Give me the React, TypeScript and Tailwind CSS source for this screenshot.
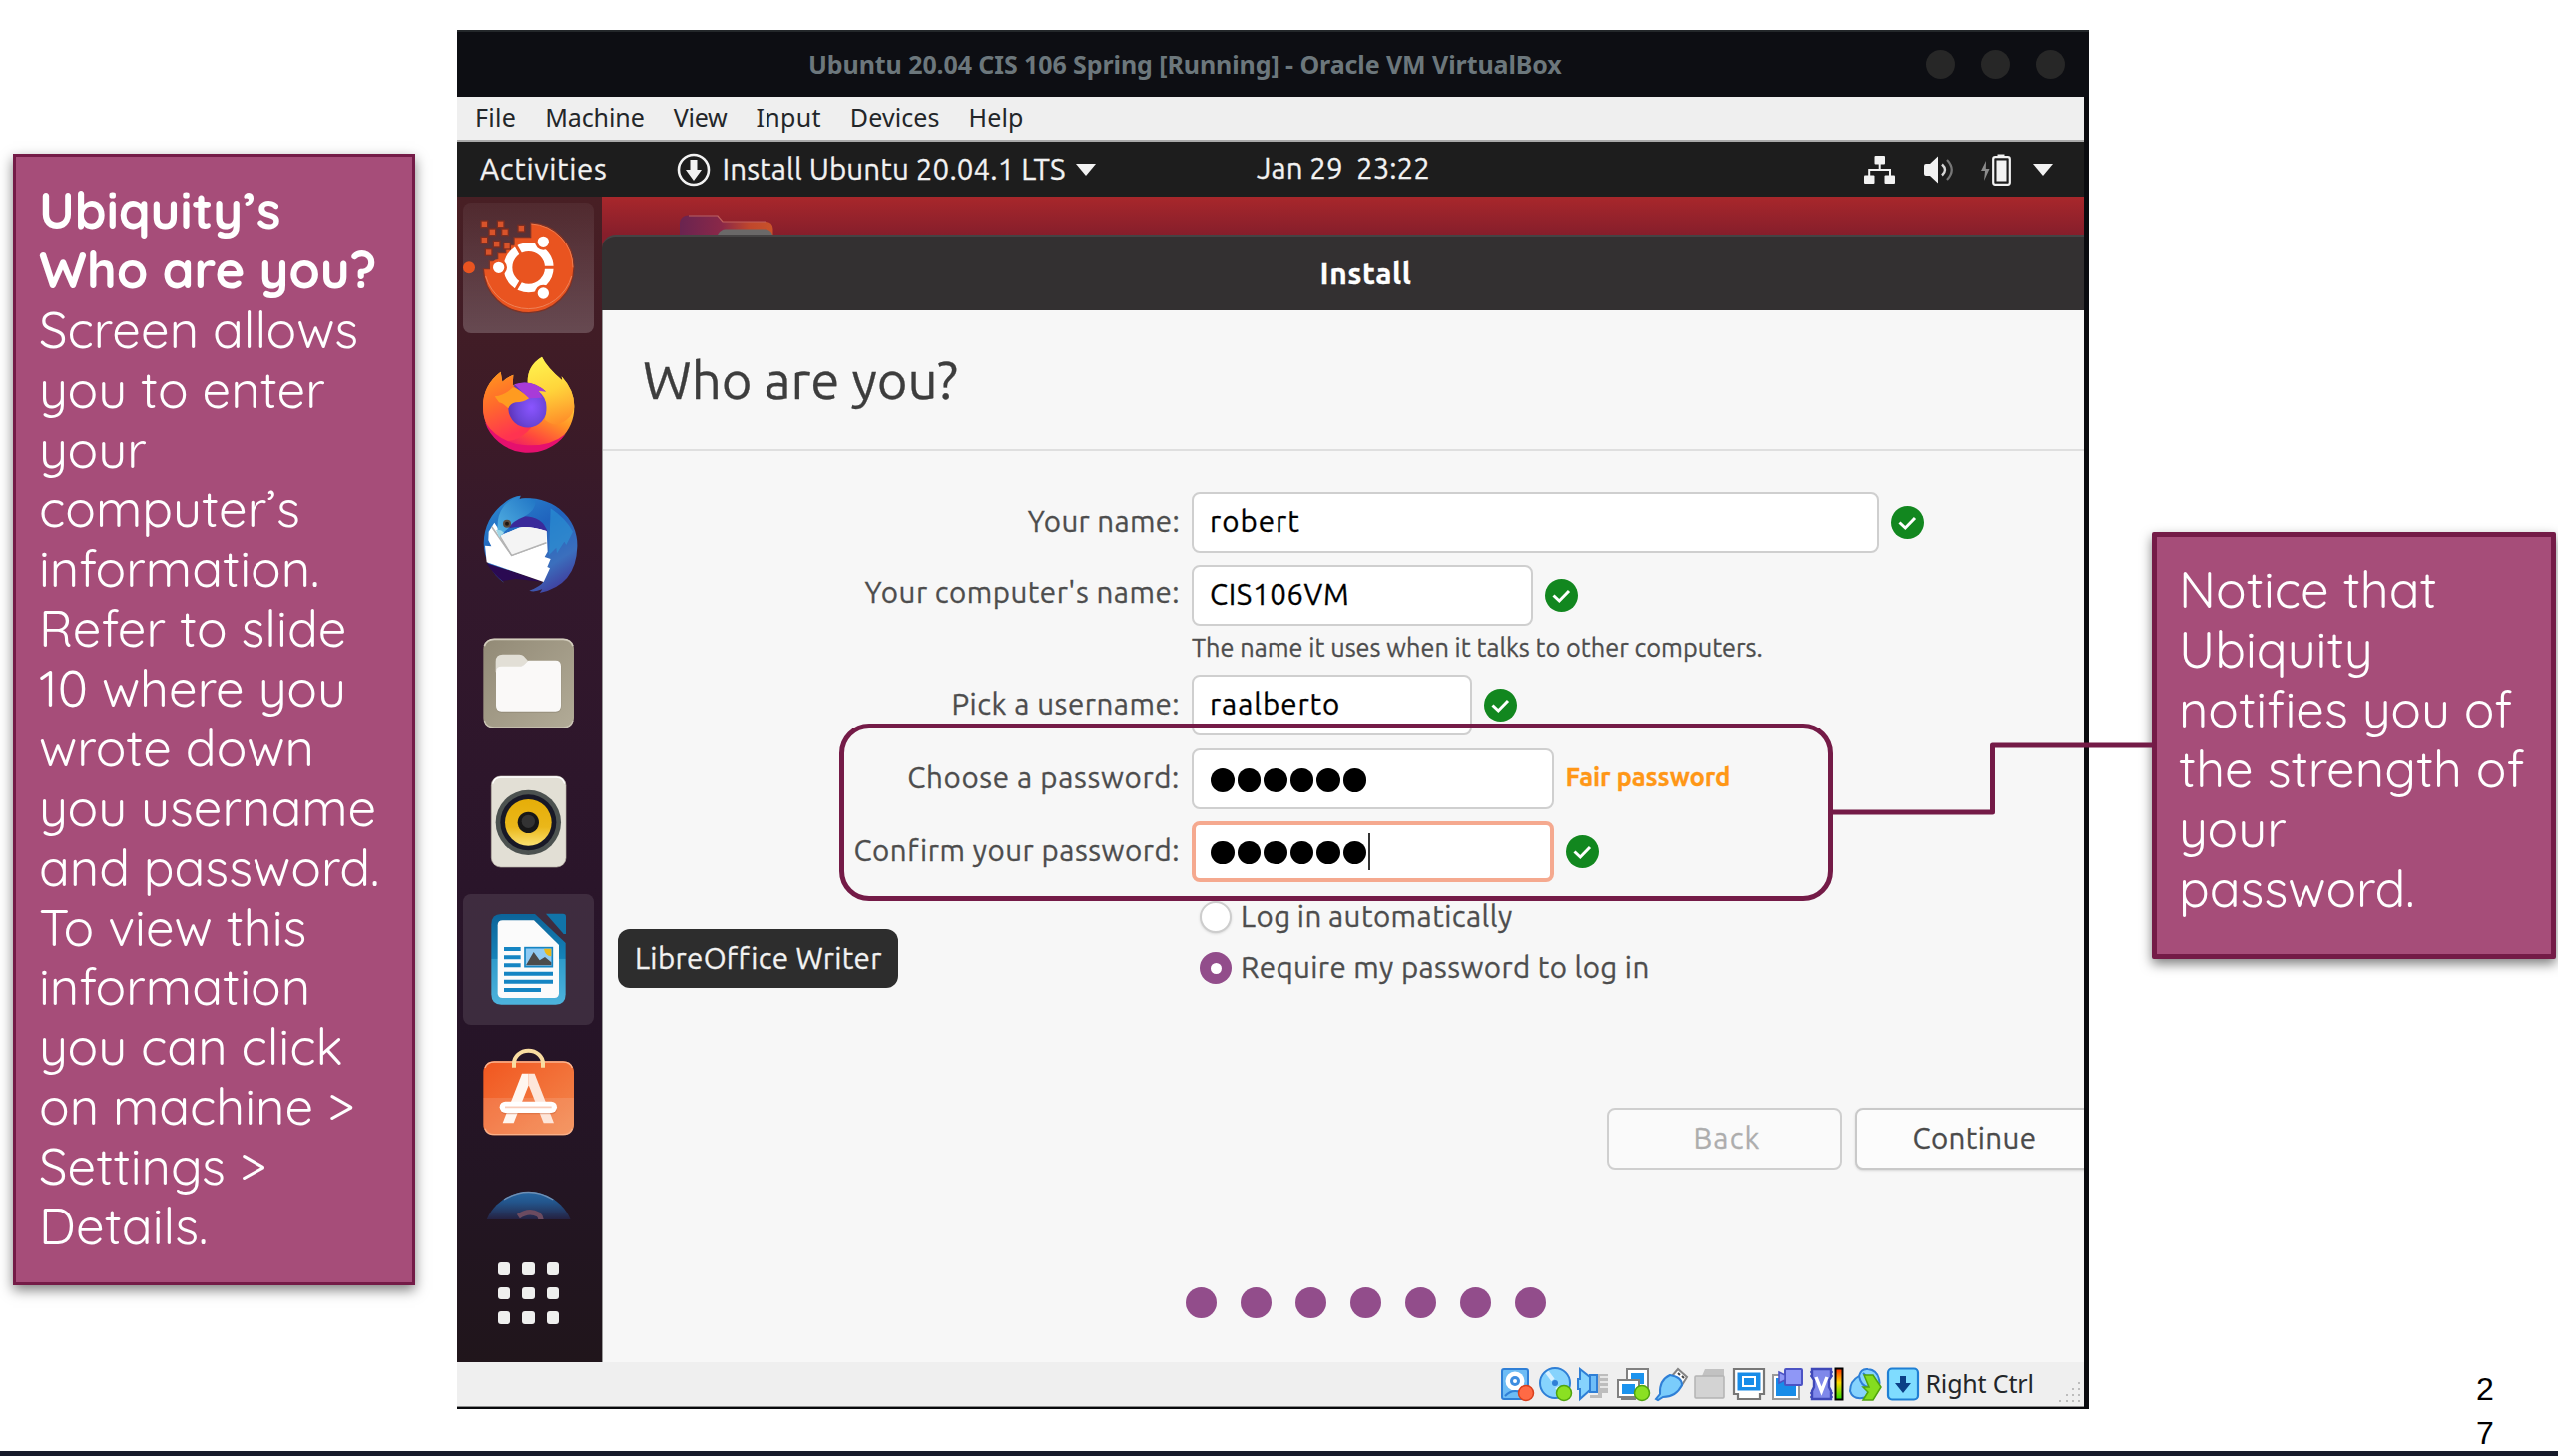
import type { ReactNode } from "react";

const ubuntu = "font-['Ubuntu','Noto_Sans',sans-serif] [-webkit-text-stroke:0.3px]";
const noto = "font-['Noto_Sans',sans-serif]";
const quicksand = "font-['Quicksand','Lato',sans-serif]";

/* ---------- Slide call-outs ---------- */

const introLines = [
  "Screen allows",
  "you to enter",
  "your",
  "computer’s",
  "information.",
  "Refer to slide",
  "10 where you",
  "wrote down",
  "you username",
  "and password.",
  "To view this",
  "information",
  "you can click",
  "on machine >",
  "Settings >",
  "Details.",
];

const noticeLines = ["Notice that", "Ubiquity", "notifies you of", "the strength of", "your", "password."];

function IntroCallout() {
  return (
    <aside
      className={`mt-[154px] ml-[13px] h-[1134px] w-[403px] shrink-0 border-[3px] border-[#741b47] bg-[#a64d79] pt-[24px] pl-[23px] text-[50.8px] leading-[59.88px] whitespace-nowrap text-white shadow-[0_5px_12px_rgba(0,0,0,0.5)] ${quicksand}`}
    >
      <p className="font-bold">Ubiquity’s</p>
      <p className="font-bold">Who are you?</p>
      {introLines.map((line, i) => (
        <p key={i}>{line}</p>
      ))}
    </aside>
  );
}

function NoticeCallout() {
  return (
    <aside
      className={`mt-[533px] ml-[63px] h-[428px] w-[405px] shrink-0 rounded-[2px] border-[5px] border-[#741b47] bg-[#a64d79] pt-[22px] pl-[22px] text-[50.8px] leading-[60px] whitespace-nowrap text-white shadow-[0_5px_12px_rgba(0,0,0,0.5)] ${quicksand}`}
    >
      {noticeLines.map((line) => (
        <p key={line}>{line}</p>
      ))}
    </aside>
  );
}

/* ---------- Host window ---------- */

function TitleBar() {
  return (
    <div className="flex h-[67px] items-center border-t-2 border-[#23272a] bg-[#0d0e13]">
      <div className={`pl-[352px] text-[25px] font-bold tracking-[-0.09px] text-[#6c777c] ${noto}`}>
        Ubuntu 20.04 CIS 106 Spring [Running] - Oracle VM VirtualBox
      </div>
      <div className="mr-[24px] ml-auto flex gap-[26px]">
        <span className="size-[29px] rounded-full bg-[#272727]" />
        <span className="size-[29px] rounded-full bg-[#272727]" />
        <span className="size-[29px] rounded-full bg-[#272727]" />
      </div>
    </div>
  );
}

function MenuBar() {
  return (
    <div
      className={`flex h-[45px] items-center gap-[29px] border-b-2 border-[#a9a9a9] bg-[#efefef] pb-px pl-[18px] text-[25px] text-[#232629] ${noto}`}
    >
      <span className="tracking-[0.3px]">File</span>
      <span className="tracking-[-0.1px]">Machine</span>
      <span className="tracking-[-0.2px]">View</span>
      <span className="tracking-[0.3px]">Input</span>
      <span className="tracking-[0.1px]">Devices</span>
      <span className="tracking-[0.1px]">Help</span>
    </div>
  );
}

function Triangle() {
  return (
    <svg className="h-[12px] w-[20px]" viewBox="0 0 20 12">
      <path d="M0 0H20L10 12Z" fill="#f2f2f2" />
    </svg>
  );
}

function TopPanel() {
  return (
    <div className={`flex h-[55px] items-center bg-[#1d1d1d] pt-px text-[29.5px] font-[450] whitespace-pre text-[#f2f2f2] ${ubuntu}`}>
      <span className="w-[220px] pl-[23px] tracking-[0.65px]">Activities</span>
      <svg className="h-[34px] w-[34px]" viewBox="0 0 34 34">
        <circle cx="17" cy="17" r="15" fill="none" stroke="#f2f2f2" strokeWidth="2.6" />
        <path d="M13.500 7H20.500V17H25L17 28L9 17H13.500Z" fill="#f2f2f2" />
      </svg>
      <span className="w-[366px] pl-[11.5px] tracking-[0.13px]">Install Ubuntu 20.04.1 LTS</span>
      <Triangle />
      <span className="ml-[161px] pb-[2px]">Jan 29  23:22</span>
      <div className="mr-[31px] ml-auto flex items-center">
        <svg className="h-[28px] w-[32px]" viewBox="0 0 32 28" fill="#f2f2f2">
          <rect x="10.500" y="0" width="10.500" height="8.500" rx="1" />
          <rect x="0" y="19.500" width="10.500" height="8.500" rx="1" />
          <rect x="20.500" y="19.500" width="10.500" height="8.500" rx="1" />
          <path d="M15.700 8V14M5.200 20V14H26V20" fill="none" stroke="#f2f2f2" strokeWidth="2" />
        </svg>
        <svg className="ml-[28px] h-[28px] w-[31px]" viewBox="0 0 31 28">
          <path d="M0 10Q0 8 2 8H6L14 0.500V27.500L6 20H2Q0 20 0 18Z" fill="#f2f2f2" />
          <path d="M18 8.500Q24 14 18 19.500" fill="none" stroke="#d8d8d8" strokeWidth="2.400" />
          <path d="M23 4Q32.500 14 23 24" fill="none" stroke="#777" strokeWidth="2.200" />
        </svg>
        <svg className="ml-[26px] h-[32px] w-[30px]" viewBox="0 0 30 32">
          <path d="M5 7L0 17H4L3 27L8.500 15H4.800Z" fill="#8b8b8b" />
          <rect x="16.500" y="0.500" width="7" height="3" fill="#f2f2f2" />
          <rect x="12.200" y="3.200" width="16.600" height="27.600" rx="2" fill="none" stroke="#f2f2f2" strokeWidth="2.200" />
          <rect x="15.500" y="6.500" width="10" height="21" fill="#f2f2f2" />
        </svg>
        <span className="ml-[22px]">
          <Triangle />
        </span>
      </div>
    </div>
  );
}

/* ---------- Dock ---------- */

const pixelBlocks = [
  [106, 104],
  [155, 104],
  [130, 128],
  [168, 128],
  [217, 117],
  [106, 153],
  [143, 165],
  [174, 171],
  [119, 190],
];

function InstallerIcon() {
  return (
    <svg className="size-full" viewBox="42 40 393 393">
      <circle cx="60" cy="236" r="18" fill="#e95420" />
      <path
        d="M245 100A136 136 0 1 1 103 240H121V216H146V192H170V168H195V144H245Z"
        fill="#e95420"
        stroke="#7c3328"
        strokeWidth="4"
      />
      <path d="M247 103A133 133 0 0 1 372 236" fill="none" stroke="#f07b4c" strokeWidth="3" />
      <path d="M110 262A134 134 0 0 0 368 262" fill="none" stroke="#ee8258" strokeWidth="3" />
      {pixelBlocks.map(([x, y]) => (
        <rect key={`${x}-${y}`} x={x - 10} y={y - 10} width="20" height="20" fill="#d9532a" stroke="#7d2d20" strokeWidth="4" />
      ))}
      <circle cx="239" cy="236" r="62" fill="none" stroke="#fff" strokeWidth="26" />
      <path d="M280 236H320M219 201L199 167M219 271L199 305" stroke="#e95420" strokeWidth="9" />
      <g fill="#fff" stroke="#e95420" strokeWidth="8">
        <circle cx="283" cy="158" r="21" />
        <circle cx="149" cy="236" r="21" />
        <circle cx="283" cy="313" r="21" />
      </g>
    </svg>
  );
}

function FirefoxIcon() {
  return (
    <svg className="size-full" viewBox="42 456 393 393">
      <defs>
        <linearGradient id="ff-body" x1="0.8" y1="0.05" x2="0.35" y2="1">
          <stop offset="0" stopColor="#fff44f" />
          <stop offset="0.3" stopColor="#ffd43a" />
          <stop offset="0.55" stopColor="#ff9226" />
          <stop offset="0.78" stopColor="#ff4a3c" />
          <stop offset="1" stopColor="#ea1070" />
        </linearGradient>
        <radialGradient id="ff-globe" cx="0.6" cy="0.55" r="0.65">
          <stop offset="0" stopColor="#8a55ff" />
          <stop offset="0.6" stopColor="#6b45d8" />
          <stop offset="1" stopColor="#5b2fb0" />
        </radialGradient>
        <linearGradient id="ff-left" x1="0" y1="0" x2="0.3" y2="1">
          <stop offset="0" stopColor="#ff9a1c" />
          <stop offset="0.5" stopColor="#ff6a2c" />
          <stop offset="1" stopColor="#ff3350" />
        </linearGradient>
        <linearGradient id="ff-flame" x1="0.3" y1="0" x2="0.7" y2="1">
          <stop offset="0" stopColor="#fff44f" />
          <stop offset="0.5" stopColor="#ffd33a" />
          <stop offset="1" stopColor="#ff8a2a" />
        </linearGradient>
      </defs>
      <path
        d="M155 548L160 578Q176 564 193 557L191 588L236 582Q234 530 279 503Q292 532 340 574L338 562Q378 606 376 655A137 133 0 0 1 102 655Q100 590 155 548Z"
        fill="url(#ff-body)"
      />
      <path d="M155 548L160 578Q176 564 193 557L191 588L240 628L180 650Q186 712 250 712Q210 765 150 755Q103 715 102 655Q100 590 155 548Z" fill="url(#ff-left)" />
      <path d="M108 700A137 133 0 0 0 350 735Q300 775 225 768Q150 762 108 700Z" fill="#e5106e" />
      <path d="M192 590Q240 565 292 608L268 606Q292 625 294 655A57 57 0 0 1 178 660Q176 640 195 636L240 628Z" fill="url(#ff-globe)" />
      <path d="M196 586Q245 568 292 608L268 606L280 626L240 628Z" fill="#a83bd8" />
      <path d="M236 580Q234 530 279 503Q292 532 340 574L338 562Q378 606 376 655Q370 690 330 705Q310 710 288 692Q302 625 270 605L292 608Q270 582 236 580Z" fill="url(#ff-flame)" opacity="0.75" />
      <path d="M137 622Q168 618 192 595Q214 602 240 628Q225 640 200 640Q184 643 178 658Q160 640 150 640Z" fill="#ff9b20" />
    </svg>
  );
}

function ThunderbirdIcon() {
  return (
    <svg className="size-full" viewBox="42 872 393 393">
      <defs>
        <linearGradient id="tb-body" x1="0.2" y1="0" x2="0.8" y2="1">
          <stop offset="0" stopColor="#2a86cf" />
          <stop offset="0.4" stopColor="#2063bd" />
          <stop offset="0.75" stopColor="#3b6fbd" />
          <stop offset="1" stopColor="#41379a" />
        </linearGradient>
        <linearGradient id="tb-head" x1="1" y1="0" x2="0" y2="1">
          <stop offset="0" stopColor="#1f73c4" />
          <stop offset="1" stopColor="#55b4e4" />
        </linearGradient>
      </defs>
      <path
        d="M166 1184A147 147 0 0 1 165 945Q185 925 215 922L212 932A147 140 0 0 1 385 1075Q382 1190 272 1214L280 1203Q255 1213 241 1207Q275 1195 285 1178L120 1128Q140 1160 166 1184Z"
        fill="url(#tb-body)"
      />
      <path d="M112 1125L280 1180L200 1172L160 1178Q140 1165 112 1125Z" fill="#2a0a52" />
      <path d="M200 985Q280 975 296 1032L262 1024Q220 1010 180 1020Z" fill="#3a2a9a" />
      <path d="M136 1003L119 1030L118 1056L127 1074L108 1072L113 1122L284 1181L303 1140L295 1136L305 1112L287 1106L296 1090L293 1028Q240 1012 210 1018L160 1040Z" fill="#fff" />
      <path d="M128 1015L188 1101L292 1063" fill="none" stroke="#b4b4b4" strokeWidth="5" />
      <path d="M152 1042L160 1048L188 1101L292 1063V1028Q240 1012 210 1018Z" fill="#f4f4f4" />
      <path d="M152 1042L188 1101L292 1063" fill="none" stroke="#b4b4b4" strokeWidth="4" />
      <path d="M146 1026Q140 945 215 922L206 934Q230 925 260 935Q262 965 225 985Q190 998 178 1020Q165 1030 152 1046Z" fill="url(#tb-head)" />
      <path d="M141 1025Q155 1022 166 1034Q156 1038 151 1048Z" fill="#9fd8e8" />
      <path d="M305 960L300 1100L322 1078L324 1095L346 1060L352 1070L372 1030Q350 990 305 960Z" fill="#2b9bd8" opacity="0.55" />
      <circle cx="174" cy="1006" r="12" fill="#5a4a3c" />
      <circle cx="174" cy="1006" r="6" fill="#1f1712" />
    </svg>
  );
}

function FilesIcon() {
  return (
    <svg className="size-full" viewBox="42 57 393 393">
      <defs>
        <linearGradient id="files-bg" x1="0" y1="0" x2="1" y2="1">
          <stop offset="0" stopColor="#928a76" />
          <stop offset="1" stopColor="#b2ab97" />
        </linearGradient>
      </defs>
      <rect x="103" y="119" width="272" height="270" rx="32" fill="url(#files-bg)" />
      <path d="M106 142Q112 121 136 121H342Q366 121 372 142" fill="none" stroke="#d3cdbd" strokeWidth="5" />
      <path d="M106 366Q112 387 136 387H342Q366 387 372 366" fill="none" stroke="#cbc5b5" strokeWidth="4" />
      <path d="M140 188Q140 167 161 167H211Q220 167 224 172L237 186H320V220H140Z" fill="#e2dfd6" />
      <path d="M142 222Q142 204 160 204H212Q220 204 225 199L238 186H320Q337 186 337 203V324Q337 341 320 341H158Q141 341 141 324Z" fill="#7d7563" opacity="0.45" />
      <path d="M141 219Q141 203 158 203H212Q220 203 225 198L238 185H320Q336 185 336 202V321Q336 338 320 338H157Q141 338 141 321Z" fill="#faf9f8" />
    </svg>
  );
}

function RhythmboxIcon() {
  return (
    <svg className="size-full" viewBox="42 473 393 393">
      <defs>
        <linearGradient id="rb-cone" x1="0" y1="0" x2="0" y2="1">
          <stop offset="0" stopColor="#e6ae08" />
          <stop offset="0.6" stopColor="#eab71a" />
          <stop offset="1" stopColor="#fbe070" />
        </linearGradient>
      </defs>
      <rect x="127" y="533" width="224" height="273" rx="28" fill="#e2dfd5" stroke="#b9b4a8" strokeWidth="2" />
      <path d="M131 556Q136 536 156 536H322Q342 536 347 556" fill="none" stroke="#fff" strokeWidth="4" />
      <circle cx="238" cy="672" r="98" fill="#4c5250" />
      <circle cx="238" cy="672" r="84" fill="#181826" />
      <circle cx="238" cy="672" r="70" fill="url(#rb-cone)" />
      <circle cx="238" cy="672" r="32" fill="#171717" />
      <circle cx="238" cy="669" r="20" fill="#333" />
    </svg>
  );
}

function WriterIcon() {
  return (
    <svg className="size-full" viewBox="42 889 393 393">
      <defs>
        <linearGradient id="lo-frame" x1="0" y1="0" x2="0" y2="1">
          <stop offset="0" stopColor="#0c6499" />
          <stop offset="0.49" stopColor="#1583b9" />
          <stop offset="0.5" stopColor="#2f9ccb" />
          <stop offset="1" stopColor="#4db3dc" />
        </linearGradient>
      </defs>
      <path d="M127 980Q127 949 157 949H258L350 1036V1190Q350 1221 320 1221H157Q127 1221 127 1190Z" fill="url(#lo-frame)" />
      <path d="M146 983Q146 968 161 968H255L330 1042V1187Q330 1201 316 1201H161Q146 1201 146 1187Z" fill="#fbfbfb" />
      <path d="M291 948H342Q351 948 351 957V1009H344Z" fill="#1174a8" />
      <path d="M165 1054H215M165 1079H215M165 1103H215M165 1128H312M165 1152H312M165 1177H276" stroke="#1585c3" strokeWidth="12" />
      <rect x="228" y="1050" width="82" height="57" fill="#8fcaf3" stroke="#1585c3" strokeWidth="5" />
      <path d="M285 1053H307V1076Q288 1074 285 1053Z" fill="#eab91b" />
      <path d="M231 1103L254 1063L272 1088L288 1078L307 1094V1103Z" fill="#4c4c4c" />
    </svg>
  );
}

function SoftwareIcon() {
  return (
    <svg className="size-full" viewBox="42 105 393 393">
      <defs>
        <linearGradient id="sw-bag" x1="0" y1="0" x2="1" y2="1">
          <stop offset="0" stopColor="#f1561f" />
          <stop offset="1" stopColor="#f38a50" />
        </linearGradient>
      </defs>
      <rect x="103" y="190" width="272" height="222" rx="32" fill="url(#sw-bag)" />
      <path d="M103 300H375V380Q375 412 343 412H135Q103 412 103 380Z" fill="#fff" opacity="0.12" />
      <path d="M108 210Q114 192 136 192H342Q364 192 370 210" fill="none" stroke="#fcb590" strokeWidth="4" />
      <path d="M108 392Q114 410 136 410H342Q364 410 370 392" fill="none" stroke="#f9b088" strokeWidth="4" />
      <path d="M195 209V197A43 38 0 0 1 282 197V209" fill="none" stroke="#f9dca0" strokeWidth="12" />
      <path d="M219 227H239V262L194 376H161Z" fill="#fff6f0" />
      <path d="M239 227H257L315 376H284L239 262Z" fill="#fde6da" />
      <rect x="154" y="316" width="170" height="33" rx="16" fill="#c25b30" opacity="0.4" />
      <rect x="152" y="311" width="172" height="34" rx="17" fill="#fff" />
      <path d="M168 328H308" stroke="#f9cdbb" strokeWidth="5" />
    </svg>
  );
}

function HelpIcon() {
  return (
    <svg className="size-full" viewBox="42 521 393 393">
      <defs>
        <linearGradient id="help-fade" x1="0" y1="580" x2="0" y2="672" gradientUnits="userSpaceOnUse">
          <stop offset="0" stopColor="#2767a3" />
          <stop offset="0.35" stopColor="#23558c" />
          <stop offset="1" stopColor="#251b38" />
        </linearGradient>
      </defs>
      <circle cx="239" cy="717" r="136" fill="url(#help-fade)" />
      <path d="M165 605Q239 560 313 605" fill="none" stroke="#6f8fb4" strokeWidth="4" />
      <path d="M208 656Q240 634 268 650Q278 658 276 676" fill="none" stroke="#6b4b60" strokeWidth="16" />
    </svg>
  );
}

const dockApps: { name: string; icon: ReactNode; tile: string }[] = [
  { name: "Installer", icon: <InstallerIcon />, tile: "bg-linear-to-b from-white/5 to-white/20" },
  { name: "Firefox", icon: <FirefoxIcon />, tile: "" },
  { name: "Thunderbird", icon: <ThunderbirdIcon />, tile: "" },
  { name: "Files", icon: <FilesIcon />, tile: "" },
  { name: "Rhythmbox", icon: <RhythmboxIcon />, tile: "" },
  { name: "Writer", icon: <WriterIcon />, tile: "bg-white/10" },
  { name: "Software", icon: <SoftwareIcon />, tile: "" },
  { name: "Help", icon: <HelpIcon />, tile: "" },
];

function Dock() {
  return (
    <nav className="flex w-[145px] shrink-0 flex-col bg-[linear-gradient(#481f24_0%,#3d1b27_18%,#33182c_33%,#2d162b_50%,#271429_68%,#231523_85%,#20151b_100%)]">
      <div className="flex h-[1025px] flex-col gap-[7.7px] overflow-hidden pt-[6px] pl-[6px]">
        {dockApps.map((app) => (
          <div key={app.name} aria-label={app.name} className={`size-[131px] shrink-0 rounded-[8px] ${app.tile}`}>
            {app.icon}
          </div>
        ))}
      </div>
      <div className="mt-[43px] ml-[40.5px] grid w-[62px] grid-cols-3 gap-[12px]">
        {Array.from({ length: 9 }, (_, i) => (
          <span key={i} className="size-[12.5px] rounded-[3px] bg-[#efefee]" />
        ))}
      </div>
    </nav>
  );
}

/* ---------- Installer ---------- */

function Check() {
  return (
    <svg className="ml-[12px] size-[33px] shrink-0" viewBox="0 0 33 33">
      <circle cx="16.5" cy="16.5" r="16.5" fill="#12871f" />
      <path d="M8.500 16.500L14.300 22L24 12" fill="none" stroke="#fff" strokeWidth="3" />
    </svg>
  );
}

function Field({
  label,
  labelClass,
  boxClass,
  children,
  after,
}: {
  label: string;
  labelClass: string;
  boxClass: string;
  children: ReactNode;
  after: ReactNode;
}) {
  return (
    <div className="flex h-[61px] items-center">
      <label className={`w-[579px] text-right text-[#4d4d4d] ${labelClass}`}>{label}</label>
      <div className={`ml-[12px] flex h-[61px] items-center rounded-[8px] bg-white text-black ${boxClass}`}>{children}</div>
      {after}
    </div>
  );
}

function Bullets() {
  return (
    <span className="flex gap-[3px]">
      {Array.from({ length: 6 }, (_, i) => (
        <span key={i} className="size-[23.5px] rounded-full bg-black" />
      ))}
    </span>
  );
}

function Installer() {
  return (
    <main className={`flex min-w-0 flex-1 flex-col overflow-hidden text-[29.5px] font-[450] whitespace-nowrap ${ubuntu}`}>
      <div className="flex h-[38px] items-end bg-linear-to-b from-[#a8272b] to-[#861e2b] pl-[78px]">
        <svg className="h-[20px] w-[95px]" viewBox="0 0 95 20">
          <defs>
            <linearGradient id="home-back" x1="0" y1="0" x2="1" y2="0">
              <stop offset="0" stopColor="#6a2450" />
              <stop offset="0.45" stopColor="#8a2848" />
              <stop offset="0.75" stopColor="#c0472c" />
              <stop offset="1" stopColor="#c9532a" />
            </linearGradient>
          </defs>
          <path d="M0 20V8Q1 0.500 9 0.500H38L43 7H86Q93 7 93.500 14V20Z" fill="url(#home-back)" />
          <path d="M9 1H38L43 7H86" fill="none" stroke="#c0605c" strokeWidth="1.200" />
          <path d="M38 20Q41 14.500 46 14.500H85Q91 14.500 93 20Z" fill="#6a6868" />
        </svg>
      </div>
      <div className="bg-[#861e2b]">
        <div className="flex h-[76px] items-center justify-center rounded-tl-[14px] border-t-2 border-[#454344] bg-[#333031] pl-[46px] text-[30px] font-bold tracking-[0.6px] text-white">
          Install
        </div>
      </div>
      <div className="flex flex-1 flex-col border-l border-[#9a9a9a] bg-[#f7f7f7]">
        <h1 className="flex h-[141px] shrink-0 items-center border-b-2 border-[#dfdfdf] pl-[40px] text-[52.7px] tracking-[-0.05px] text-[#3d3d3d]">
          Who are you?
        </h1>
        <div className="-ml-px flex flex-col pt-[41px]">
          <Field
            label="Your name:"
            labelClass="tracking-[0.35px] pb-px"
            boxClass="w-[689px] border-2 border-[#cfcfcf] pl-[16px] tracking-[1px]"
            after={<Check />}
          >
            robert
          </Field>
          <div className="h-[12px]" />
          <Field
            label="Your computer's name:"
            labelClass="tracking-[0.5px] pb-[5px]"
            boxClass="w-[342px] border-2 border-[#cfcfcf] pl-[16px] tracking-[0.6px]"
            after={<Check />}
          >
            CIS106VM
          </Field>
          <div className="mt-[6px] ml-[591px] h-[31px] text-[25.3px] leading-[31px] text-[#4d4d4d]">
            The name it uses when it talks to other computers.
          </div>
          <div className="h-[12px]" />
          <Field
            label="Pick a username:"
            labelClass="tracking-[0.52px] pb-px"
            boxClass="w-[281px] border-2 border-[#cfcfcf] pl-[16px] tracking-[0.95px]"
            after={<Check />}
          >
            raalberto
          </Field>
          <div className="h-[13px]" />
          <Field
            label="Choose a password:"
            labelClass="tracking-[0.65px] pb-px"
            boxClass="w-[363px] border-2 border-[#cfcfcf] pl-[17px] pt-[3px]"
            after={
              <span className="ml-[11.5px] pb-[2px] text-[25.7px] font-bold tracking-[-0.1px] text-[#ff9717]">Fair password</span>
            }
          >
            <Bullets />
          </Field>
          <div className="h-[12px]" />
          <Field
            label="Confirm your password:"
            labelClass="tracking-[0.52px] pb-px"
            boxClass="w-[363px] border-4 border-[#f5a98f] pl-[15px] pt-[2px]"
            after={<Check />}
          >
            <Bullets />
            <span className="mb-[2px] ml-[2px] h-[37px] w-[1.5px] bg-[#333]" />
          </Field>
          <label className="mt-[19px] ml-[599px] flex h-[32px] items-center text-[#4d4d4d]">
            <span className="size-[32px] rounded-full border-2 border-[#cdcdcd] bg-white shadow-sm" />
            <span className="pl-[9px] tracking-[0.46px] [word-spacing:-1px]">Log in automatically</span>
          </label>
          <label className="mt-[19px] ml-[599px] flex h-[32px] items-center text-[#4d4d4d]">
            <span className="flex size-[32px] items-center justify-center rounded-full bg-[#924d8b]">
              <span className="size-[11px] rounded-full bg-white" />
            </span>
            <span className="pl-[9px] tracking-[0.4px]">Require my password to log in</span>
          </label>
          <div className="mt-[124px] ml-[1007px] flex gap-[13px]">
            <button className="h-[62px] w-[236px] shrink-0 rounded-[8px] border-2 border-[#cfcfcf] bg-[#fafafa] pl-[4px] tracking-[1.1px] text-[#adadad]">
              Back
            </button>
            <button className="h-[62px] w-[236px] shrink-0 rounded-[8px] border-2 border-[#c9c9c9] bg-[#fcfcfc] pl-[3px] tracking-[0.4px] text-[#4a4a4a] shadow-sm">
              Continue
            </button>
          </div>
          <div className="mt-[118px] ml-[584.5px] flex gap-[24px]">
            {Array.from({ length: 7 }, (_, i) => (
              <span key={i} className="size-[31px] rounded-full bg-[#924d8b]" />
            ))}
          </div>
        </div>
      </div>
    </main>
  );
}

/* ---------- Status bar ---------- */

function StatusIcon({ children }: { children: ReactNode }) {
  return (
    <svg className="h-[34px] w-[33px] shrink-0 overflow-visible" viewBox="0 0 33 34">
      {children}
    </svg>
  );
}

function StatusBar() {
  return (
    <div className="flex h-[45px] items-center border-b border-[#8d8d8d] bg-[#efefef] pl-[1045.5px]">
      <div className="flex gap-[5.8px]">
        <StatusIcon>
          <rect x="1" y="2" width="26" height="30" rx="2" fill="#6dbcf5" stroke="#2f7fd6" strokeWidth="2" />
          <circle cx="14" cy="14" r="9.500" fill="#fff" />
          <circle cx="14" cy="14" r="5" fill="#3f8ee0" />
          <circle cx="14" cy="14" r="2" fill="#fff" />
          <path d="M4 29Q12 20 24 27" fill="none" stroke="#2f7fd6" strokeWidth="2" />
          <circle cx="25" cy="26" r="7.500" fill="#ff6a45" stroke="#d8401e" strokeWidth="1.500" />
        </StatusIcon>
        <StatusIcon>
          <circle cx="16" cy="16" r="15" fill="#86d3fd" stroke="#2f7fd6" strokeWidth="2" />
          <path d="M8 5L14 13M18 20L23 29" stroke="#d8f1ff" strokeWidth="4" />
          <circle cx="16" cy="16" r="3" fill="#2f7fd6" />
          <circle cx="25" cy="26" r="7.500" fill="#8be022" stroke="#4fa30e" strokeWidth="1.500" />
        </StatusIcon>
        <StatusIcon>
          <path d="M20 7H30V26H24V31H12V28H20Z" fill="#bdbdbd" />
          <path d="M22 10H30M22 15H30M22 20H30" stroke="#e6e6e6" strokeWidth="2" />
          <path d="M2 2L12 10V23L2 32V22H0V12H2Z" fill="#86d3fd" stroke="#2f7fd6" strokeWidth="2" />
          <rect x="12" y="8" width="7" height="17" fill="#6ebef8" stroke="#2f7fd6" strokeWidth="2" />
        </StatusIcon>
        <StatusIcon>
          <rect x="10" y="2" width="21" height="19" fill="#fff" stroke="#808080" strokeWidth="2" />
          <rect x="14" y="6" width="13" height="11" fill="#1b93ee" />
          <rect x="1" y="13" width="21" height="17" fill="#fff" stroke="#808080" strokeWidth="2" />
          <rect x="5" y="17" width="13" height="10" fill="#1b93ee" />
          <path d="M4 32H19" stroke="#808080" strokeWidth="2" />
          <circle cx="25" cy="26" r="7.500" fill="#8be022" stroke="#4fa30e" strokeWidth="1.500" />
        </StatusIcon>
        <StatusIcon>
          <path d="M16 9L22 2L31 10L26 18Z" fill="#fff" stroke="#858585" strokeWidth="2" />
          <path d="M22 6L24 8M26 9L28 11" stroke="#444" strokeWidth="2" />
          <path d="M14 8Q26 10 26 18Q20 30 7 30L2 33L0 32L4 27Q3 13 14 8Z" fill="#7accfb" stroke="#2f7fd6" strokeWidth="2" />
        </StatusIcon>
        <StatusIcon>
          <path d="M1 9H8L11 2H30V31H1Z" fill="#c2c2c2" />
          <rect x="1" y="9" width="29" height="22" rx="1" fill="#d3d3d3" stroke="#b4b4b4" strokeWidth="1.500" />
        </StatusIcon>
        <StatusIcon>
          <path d="M1 2H31V27H27V32H5V27H1Z" fill="#fff" stroke="#777" strokeWidth="2.200" />
          <rect x="4.500" y="5.500" width="23" height="18" fill="#188ce8" />
          <rect x="10" y="10" width="12" height="9" fill="none" stroke="#fff" strokeWidth="2" />
        </StatusIcon>
        <StatusIcon>
          <rect x="1" y="8" width="27" height="24" fill="#fff" stroke="#9a9a9a" strokeWidth="2" />
          <rect x="4" y="11" width="21" height="18" fill="#188ce8" />
          <rect x="13" y="2" width="18" height="16" rx="1" fill="#8f97f6" stroke="#4c53c4" strokeWidth="2" />
          <path d="M7 5L13 8V13L7 16Z" fill="#8f97f6" stroke="#4c53c4" strokeWidth="1.500" />
        </StatusIcon>
        <StatusIcon>
          <path d="M2 2H21V10L19 13V20L21 24V32H2V24L4 20V13L2 10Z" fill="#7f88ea" stroke="#3f48b8" strokeWidth="2.400" />
          <path d="M0 5H3M0 9H3M0 26H3M0 30H3M20 5H23M20 9H23M20 26H23M20 30H23" stroke="#3f48b8" strokeWidth="1.500" />
          <path d="M6 10L11.500 24L17 10" fill="none" stroke="#fff" strokeWidth="3.400" />
          <defs>
            <linearGradient id="cpu-load" x1="0" y1="0" x2="0" y2="1">
              <stop offset="0" stopColor="#ff2a00" />
              <stop offset="0.45" stopColor="#ffd800" />
              <stop offset="1" stopColor="#22d800" />
            </linearGradient>
          </defs>
          <rect x="25.500" y="1.500" width="7" height="31" fill="url(#cpu-load)" stroke="#000" strokeWidth="2" />
        </StatusIcon>
        <StatusIcon>
          <path d="M10 9Q12 1 19 2Q28 3 30 12Q32 20 26 20L18 30Q4 34 1 24Q1 14 10 9Z" fill="#86d3fd" stroke="#2f7fd6" strokeWidth="2" />
          <path d="M10 9Q12 20 20 20M14 6L22 14" fill="none" stroke="#2f7fd6" strokeWidth="2" />
          <path d="M15 8H24L32 20L24 33H14L19 25L14 20H20Z" fill="#84dd1f" stroke="#4fa30e" strokeWidth="1.500" />
        </StatusIcon>
        <StatusIcon>
          <rect x="1" y="1.500" width="30" height="31" rx="4" fill="#7fdcff" stroke="#1f7fd4" strokeWidth="2.200" />
          <path d="M13 9H19V16H24L16 26L8 16H13Z" fill="#0b3f86" />
        </StatusIcon>
      </div>
      <span className={`pl-[5px] text-[25px] tracking-[-0.17px] text-[#232629] ${noto}`}>Right Ctrl</span>
      <svg className="mr-[3px] ml-auto h-[24px] w-[23px] self-end" viewBox="0 0 23 24" fill="#bdbdbd">
        <rect x="20" y="0" width="2" height="2" />
        <rect x="14" y="6" width="2" height="2" />
        <rect x="20" y="6" width="2" height="2" />
        <rect x="8" y="12" width="2" height="2" />
        <rect x="14" y="12" width="2" height="2" />
        <rect x="20" y="12" width="2" height="2" />
        <rect x="1" y="18" width="2" height="2" />
        <rect x="8" y="18" width="2" height="2" />
        <rect x="14" y="18" width="2" height="2" />
        <rect x="20" y="18" width="2" height="2" />
      </svg>
    </div>
  );
}

function VmWindow() {
  return (
    <section className="mt-[30px] ml-[42px] flex h-[1382px] w-[1635px] shrink-0 flex-col border-b-2 border-[#08090c] bg-[#0a0b0f]">
      <TitleBar />
      <div className="mr-[5px] flex flex-1 flex-col">
        <MenuBar />
        <TopPanel />
        <div className="flex h-[1168px]">
          <Dock />
          <Installer />
        </div>
        <StatusBar />
      </div>
    </section>
  );
}

export default function App() {
  return (
    <div className="relative flex h-[1459px] w-[2563px] flex-col overflow-hidden bg-white">
      <div className="flex h-[1454px] items-start">
        <IntroCallout />
        <VmWindow />
        <NoticeCallout />
      </div>
      <div className="h-[5px] bg-[#161a2a]" />

      {/* Dock tooltip */}
      <div
        className={`absolute top-[931px] left-[619px] flex h-[59px] w-[281px] items-center rounded-[12px] bg-[#2d2d2d] pt-px pl-[17px] text-[29.5px] font-[450] tracking-[0.35px] whitespace-nowrap text-[#f2f2f2] ${ubuntu}`}
      >
        LibreOffice Writer
      </div>

      {/* Highlight frame and its connector */}
      <div className="absolute top-[725px] left-[841px] h-[178px] w-[996px] rounded-[30px] border-[5px] border-[#741b47]" />
      <svg className="absolute top-[740px] left-[1834px] h-[80px] w-[325px]" viewBox="0 0 325 80">
        <path d="M0 74H162.500V7H325" fill="none" stroke="#741b47" strokeWidth="5" strokeLinejoin="round" />
      </svg>

      {/* Slide number */}
      <div className="absolute top-[1370px] left-[2481px] w-[20px] font-['Liberation_Sans',Arial,sans-serif] text-[32px] leading-[44px] break-all text-black">
        27
      </div>
    </div>
  );
}
